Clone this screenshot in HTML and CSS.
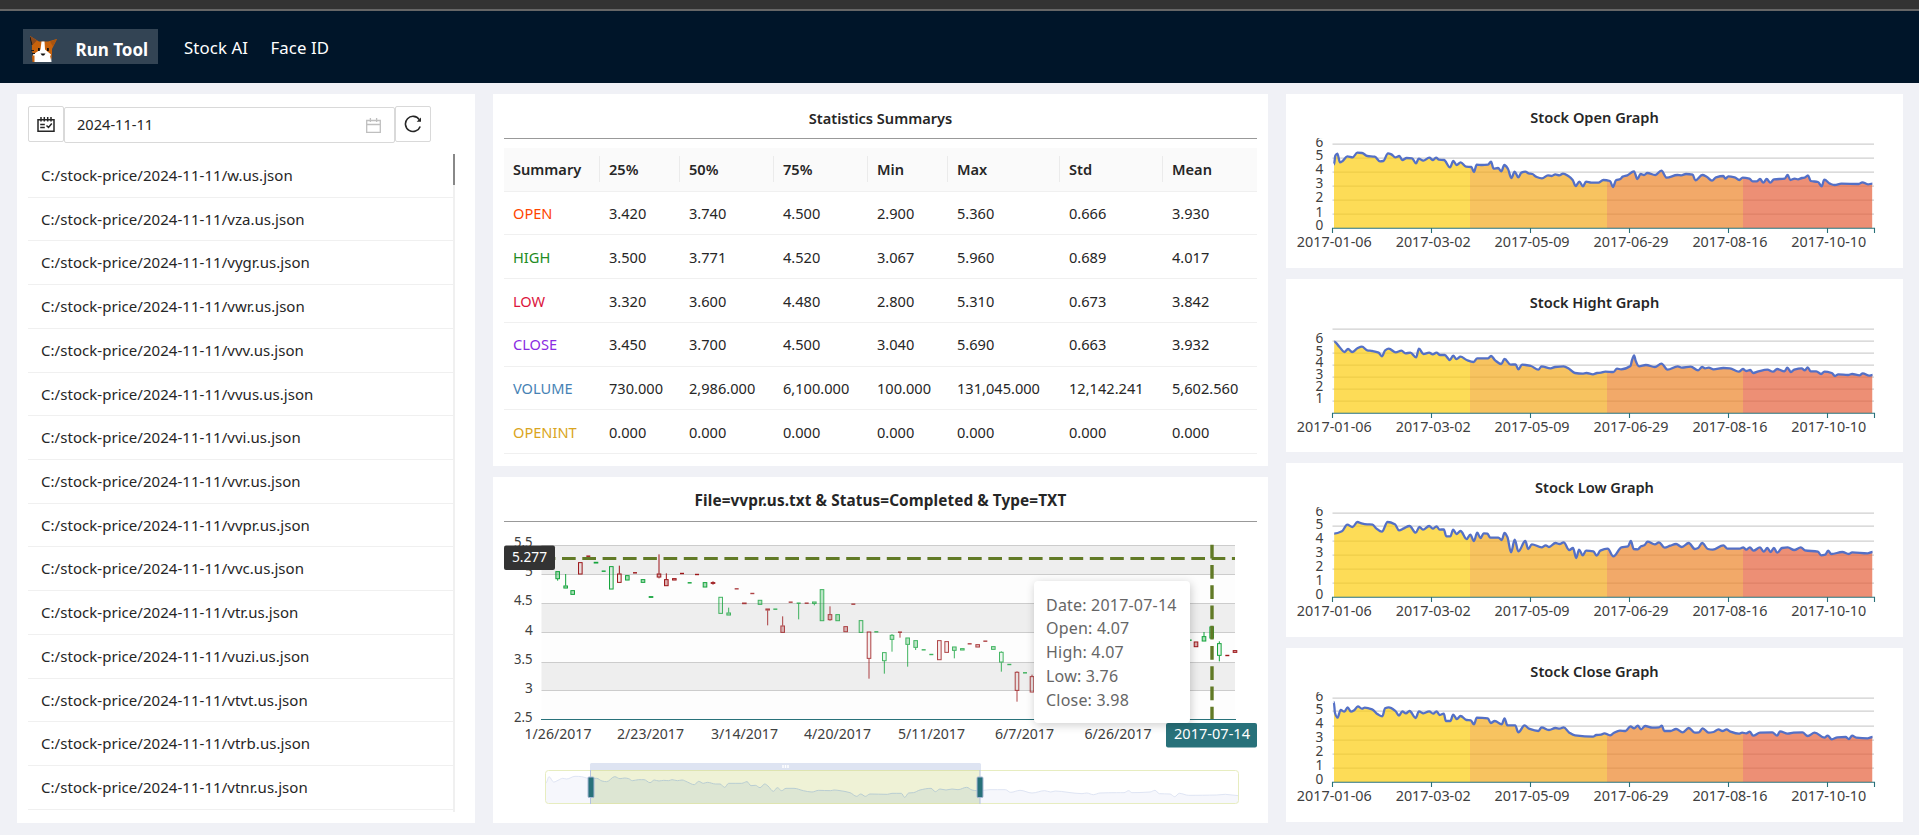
FILE: index.html
```
<!DOCTYPE html>
<html lang="en">
<head>
<meta charset="utf-8">
<title>Run Tool</title>
<link rel="stylesheet" href="styles.css">
</head>
<body>
<div class="window-strip"></div>
<header class="header">
  <div class="brand">
    <svg class="brand-logo" viewBox="0 0 27 26">
      <path d="M0 0 9 5.500h9L27 3l-5 10v5l-1 3H4L2 15V8z" fill="#c8620c"/>
      <path d="M0 0 7 4.500 2.500 9z" fill="#8d4a1d"/>
      <path d="M27 3 20 5.500 23 10.500z" fill="#a9540f"/>
      <path d="M11.500 5.500h3l.5 8 6 5 .5 7.500H3.500l-.5-7.500 7.500-5z" fill="#fff"/>
      <path d="M2 19.500h2.500V26H2.500zM20 19.500h2L21 24z" fill="#c8620c"/>
      <path d="M8 12h1.800v3H8zM17 12h1.800v3H17zM10.500 17.500h5L14 19.500h-2z" fill="#111"/>
      <path d="M1 14.500h3M2 17.500h3M0 1l2 8" stroke="#1b1b1b" fill="none"/>
    </svg>
    <span class="brand-name">Run Tool</span>
  </div>
  <nav class="nav"><a>Stock AI</a><a>Face ID</a></nav>
</header>
<main class="layout">
  <section class="card files">
    <div class="toolbar">
      <button class="icon-btn" aria-label="Schedule">
        <svg width="18" height="15" viewBox="0 0 18 15" fill="none" stroke="#262626" stroke-width="1.500">
          <path d="M1 2.800h16v11.400H1zM4 0v4.500M7.300 0v4.500M10.700 0v4.500M14 0v4.500M3.200 7.500h4.600M3.200 10.500h4.600M9.500 8.500l2 2 3.300-4"/>
        </svg>
      </button>
      <div class="date-input"><span>2024-11-11</span>
        <svg width="15" height="15" viewBox="0 0 15 15" fill="none" stroke="#bfbfbf" stroke-width="1.300"><path d="M.7 2.500h13.600v11.800H.7zM.7 6.500h13.600M4.400 0v4M10.600 0v4"/></svg>
      </div>
      <button class="icon-btn" aria-label="Reload">
        <svg width="18" height="18" viewBox="0 0 18 18" fill="none" stroke="#262626" stroke-width="1.600"><path d="M16.200 11.500A7.600 7.600 0 1 1 15.300 4.600"/><path d="M17 2.500v4.200h-4.300z" fill="#262626" stroke="none"/></svg>
      </button>
    </div>
    <div class="list-wrap">
      <ul class="list">
        <li>C:/stock-price/2024-11-11/w.us.json</li>
        <li>C:/stock-price/2024-11-11/vza.us.json</li>
        <li>C:/stock-price/2024-11-11/vygr.us.json</li>
        <li>C:/stock-price/2024-11-11/vwr.us.json</li>
        <li>C:/stock-price/2024-11-11/vvv.us.json</li>
        <li>C:/stock-price/2024-11-11/vvus.us.json</li>
        <li>C:/stock-price/2024-11-11/vvi.us.json</li>
        <li>C:/stock-price/2024-11-11/vvr.us.json</li>
        <li>C:/stock-price/2024-11-11/vvpr.us.json</li>
        <li>C:/stock-price/2024-11-11/vvc.us.json</li>
        <li>C:/stock-price/2024-11-11/vtr.us.json</li>
        <li>C:/stock-price/2024-11-11/vuzi.us.json</li>
        <li>C:/stock-price/2024-11-11/vtvt.us.json</li>
        <li>C:/stock-price/2024-11-11/vtrb.us.json</li>
        <li>C:/stock-price/2024-11-11/vtnr.us.json</li>
      </ul>
      <div class="scroll-track"><div class="scroll-thumb"></div></div>
    </div>
  </section>
  <div class="middle">
    <section class="card stats">
      <h2 class="card-title ruled">Statistics Summarys</h2>
      <table class="table">
        <colgroup><col class="w96"><col class="w80"><col class="w94"><col class="w94"><col class="w80"><col class="w112"><col class="w103"><col class="w94"></colgroup>
        <thead><tr><th>Summary</th><th>25%</th><th>50%</th><th>75%</th><th>Min</th><th>Max</th><th>Std</th><th>Mean</th></tr></thead>
        <tbody>
          <tr><td class="c-open">OPEN</td><td>3.420</td><td>3.740</td><td>4.500</td><td>2.900</td><td>5.360</td><td>0.666</td><td>3.930</td></tr>
          <tr><td class="c-high">HIGH</td><td>3.500</td><td>3.771</td><td>4.520</td><td>3.067</td><td>5.960</td><td>0.689</td><td>4.017</td></tr>
          <tr><td class="c-low">LOW</td><td>3.320</td><td>3.600</td><td>4.480</td><td>2.800</td><td>5.310</td><td>0.673</td><td>3.842</td></tr>
          <tr><td class="c-close">CLOSE</td><td>3.450</td><td>3.700</td><td>4.500</td><td>3.040</td><td>5.690</td><td>0.663</td><td>3.932</td></tr>
          <tr><td class="c-volume">VOLUME</td><td>730.000</td><td>2,986.000</td><td>6,100.000</td><td>100.000</td><td>131,045.000</td><td>12,142.241</td><td>5,602.560</td></tr>
          <tr><td class="c-openint">OPENINT</td><td>0.000</td><td>0.000</td><td>0.000</td><td>0.000</td><td>0.000</td><td>0.000</td><td>0.000</td></tr>
        </tbody>
      </table>
    </section>
    <section class="card candle">
      <h2 class="card-title ruled strong">File=vvpr.us.txt &amp; Status=Completed &amp; Type=TXT</h2>
      <svg id="candle" class="candle-chart" viewBox="504 522 753 290"></svg>
      <div class="tooltip">Date: 2017-07-14<br>Open: 4.07<br>High: 4.07<br>Low: 3.76<br>Close: 3.98</div>
    </section>
  </div>
  <div class="right">
    <section class="card graph"><h2 class="card-title">Stock Open Graph</h2><svg class="line-chart" data-series="open" viewBox="1286 44 617 129"></svg></section>
    <section class="card graph"><h2 class="card-title">Stock Hight Graph</h2><svg class="line-chart" data-series="high" viewBox="1286 44 617 129"></svg></section>
    <section class="card graph"><h2 class="card-title">Stock Low Graph</h2><svg class="line-chart" data-series="low" viewBox="1286 44 617 129"></svg></section>
    <section class="card graph"><h2 class="card-title">Stock Close Graph</h2><svg class="line-chart" data-series="close" viewBox="1286 44 617 129"></svg></section>
  </div>
</main>
<script src="charts.js"></script>
</body>
</html>
```
FILE: styles.css
```
* { box-sizing: border-box; }
body {
  margin: 0;
  height: 835px;
  overflow: hidden;
  background: #f0f1f6;
  color: #262626;
  font: 14.6px/24px "Noto Sans", "Open Sans", sans-serif;
}
.window-strip { height: 11px; background: #333; border-bottom: 2px solid #666; }
.header { height: 72px; background: #001529; display: flex; padding: 18px 0 0 23px; color: #fff; font-size: 16.8px; }
.brand { width: 135px; height: 35px; background: #334454; display: flex; padding: 7px 0 0 7px; }
.brand-logo { width: 27px; height: 26px; }
.brand-name { margin-left: 18.500px; margin-top: 2px; font-weight: 700; font-size: 17px; letter-spacing: 0; line-height: 24px; white-space: nowrap; }
.nav { display: flex; gap: 22.500px; margin: 7px 0 0 26px; white-space: nowrap; letter-spacing: .1px; }
.layout { display: grid; grid-template-columns: 458px 775px 617px; gap: 18px; padding: 11px 17px 12px; }
.card { background: #fff; }
.files { height: 729px; padding: 12px 11px 0; }
.toolbar { display: flex; align-items: flex-start; }
.icon-btn { width: 36px; height: 36px; padding: 0; border: 1px solid #d9d9d9; border-radius: 2px; background: #fff; display: flex; align-items: center; justify-content: center; }
.date-input { width: 331px; height: 36px; margin-top: 1px; border: 1px solid #d9d9d9; border-radius: 2px; padding: 0 13px 0 12px; display: flex; align-items: center; justify-content: space-between; }
.date-input span { padding-bottom: 2px; }
.list-wrap { display: flex; height: 658px; margin-top: 11px; width: 427px; overflow: hidden; }
.list { list-style: none; margin: 0; padding: 0; width: 425px; }
.list li { height: 43.720px; border-bottom: 1px solid #f0f0f0; padding: 9px 13px 0; font-size: 15px; letter-spacing: .04px; white-space: nowrap; }
.scroll-track { width: 2px; background: #f0f0f0; }
.scroll-thumb { height: 31px; background: #888; }
.middle { display: flex; flex-direction: column; gap: 11px; }
.stats { height: 372px; padding: 0 11px; }
.candle { height: 346px; padding: 0 11px; position: relative; }
.card-title { margin: 0; height: 44px; padding-top: 11.800px; text-align: center; font-size: 14.6px; font-weight: 600; line-height: 24px; white-space: nowrap; }
.graph .card-title { padding-top: 11.400px; }
.ruled { height: 45px; border-bottom: 1px solid #999; }
.card-title.strong { font-weight: 700; font-size: 15.300px; letter-spacing: .1px; padding-top: 11px; }
.table { width: 753px; margin-top: 9px; border-collapse: separate; border-spacing: 0; table-layout: fixed; text-align: left; }
.w80 { width: 80px; } .w94 { width: 94px; } .w96 { width: 96px; } .w103 { width: 103px; } .w112 { width: 112px; }
.table th, .table td { height: 43.720px; padding: 0 0 0 9px; border-bottom: 1px solid #f0f0f0; white-space: nowrap; }
.table th { background: linear-gradient(#ebebeb, #ebebeb) right center / 1px 26px no-repeat #fafafa; font-weight: 600; }
.table th:last-child { background: #fafafa; }
.c-open { color: #ff4500; } .c-high { color: #228b22; } .c-low { color: #dc143c; }
.c-close { color: #8a2be2; } .c-volume { color: #4682b4; } .c-openint { color: #daa520; }
.candle-chart { display: block; width: 753px; height: 290px; overflow: hidden; }
.tooltip { position: absolute; left: 541px; top: 104px; width: 156px; height: 142px; padding: 12.500px 12px; background: #fff; border-radius: 4px; box-shadow: 1px 2px 10px rgba(0,0,0,.2); color: #666; font-size: 16px; letter-spacing: .2px; line-height: 23.800px; white-space: nowrap; }
.right { display: flex; flex-direction: column; gap: 11px; }
.graph { height: 173.650px; }
.line-chart { display: block; width: 617px; height: 129px; }
svg text { font-family: "Noto Sans", "Open Sans", sans-serif; font-size: 14.200px; fill: #404040; }
svg text.badge { font-size: 14.600px; fill: #fff; }
```
FILE: charts.js
```
const n = v => v.toFixed(2);

function label(x, y, text, width, cls) {
  return `<text x="${x}" y="${y}" textLength="${width}" lengthAdjust="spacingAndGlyphs"${cls ? ` class="${cls}"` : ''}>${text}</text>`;
}

/* Smooth curve through the points, keeping local extremes flat. */
function smooth(p) {
  const slope = i => {
    if (i === 0 || i === p.length - 1) return 0;
    const a = (p[i][1] - p[i - 1][1]) / (p[i][0] - p[i - 1][0]);
    const b = (p[i + 1][1] - p[i][1]) / (p[i + 1][0] - p[i][0]);
    return a * b <= 0 ? 0 : 2 * a * b / (a + b);
  };
  let d = `M${n(p[0][0])} ${n(p[0][1])}`;
  for (let i = 1; i < p.length; i++) {
    const h = (p[i][0] - p[i - 1][0]) * 0.36;
    d += `C${n(p[i - 1][0] + h)} ${n(p[i - 1][1] + slope(i - 1) * h)} ${n(p[i][0] - h)} ${n(p[i][1] - slope(i) * h)} ${n(p[i][0])} ${n(p[i][1])}`;
  }
  return d;
}

const parse = s => s.trim().split(/\s+/).map(t => t.split(',').map(Number));

const series = {
  open: { sx: 3, base: 414, ticks: [162, 203, 247, 287, 331, 372], labels: [[6,158],[5,197],[4,239],[3,280],[2,323],[1,366],[0,407]],
    pts: `162,223 166,197 172,191 180,217 188,213 202,199 218,202 232,188 246,189 262,198 284,200 300,214 310,213 324,190 334,193 346,202 358,198 367,210 380,204 396,205 408,220 416,206 430,212 448,203 459,210 468,203 477,209 492,210 510,232 520,213 530,225 542,217 558,230 574,231 582,246 590,224 606,225 624,224 633,215 641,236 654,234 664,244 673,225 684,237 694,264 704,245 715,262 724,248 736,245 746,250 757,252 768,260 786,265 804,256 815,258 826,253 838,256 849,251 866,259 878,270 887,288 898,275 909,289 918,275 934,278 955,278 970,270 990,273 999,291 1008,271 1021,267 1028,260 1042,256 1062,244 1072,267 1082,252 1092,255 1102,249 1126,255 1144,242 1160,263 1192,255 1204,256 1218,252 1238,254 1246,271 1267,255 1280,260 1296,272 1308,262 1330,258 1336,266 1345,259 1364,262 1378,270 1388,263 1408,266 1418,274 1430,274 1440,267 1450,278 1460,267 1471,278 1482,268 1514,266 1523,255 1531,270 1544,266 1554,268 1566,264 1574,263 1584,256 1592,273 1614,276 1625,289 1633,269 1650,281 1664,285 1684,281 1736,282 1747,277 1764,283 1777,281` },
  high: { sx: 2.454, base: 414, ticks: [162, 199, 233, 270, 307, 341, 379], labels: [[6,190],[5,228],[4,262],[3,298],[2,334],[1,370]],
    pts: `133,200 146,216 158,231 167,222 177,231 190,220 201,215 214,226 226,228 242,233 250,244 258,226 267,221 284,232 298,227 308,235 320,233 334,247 341,221 352,237 366,233 375,238 384,233 393,240 404,240 417,255 425,242 433,252 443,245 458,255 475,261 484,250 510,250 518,243 528,256 543,267 551,252 566,269 578,268 585,283 594,269 616,273 634,284 642,274 664,280 675,276 696,274 710,282 724,294 742,296 752,294 768,298 778,294 788,293 798,290 818,291 827,281 837,283 860,273 864,255 869,241 873,258 881,274 898,270 920,276 936,266 951,284 976,274 986,278 1008,275 1026,286 1036,276 1043,280 1052,278 1064,283 1088,279 1104,280 1126,290 1136,282 1144,288 1154,285 1161,294 1174,289 1196,284 1210,290 1220,282 1238,289 1245,278 1254,291 1262,284 1280,280 1288,286 1295,277 1302,289 1316,289 1328,297 1336,290 1354,294 1362,303 1370,298 1394,300 1404,297 1422,301 1430,295 1446,302 1454,300` },
  low: { sx: 2.454, base: 412, ticks: [159, 200, 244, 285, 328, 370], labels: [[6,155],[5,193],[4,235],[3,277],[2,321],[1,363],[0,404]],
    pts: `133,222 152,215 165,195 178,202 190,187 200,191 214,194 227,195 236,206 250,216 264,187 282,194 292,212 304,206 318,199 333,219 342,202 351,210 366,199 375,207 384,200 392,210 402,209 408,230 418,230 425,210 433,223 443,214 458,238 467,225 476,244 484,219 492,235 500,221 509,222 516,234 536,234 544,241 551,220 558,232 567,278 576,240 585,275 602,244 609,268 618,254 642,263 652,257 660,262 676,250 686,253 696,248 710,271 719,265 727,295 734,270 743,287 751,273 769,275 777,288 786,273 804,267 818,290 838,263 854,260 861,244 868,268 878,269 886,260 894,257 902,246 920,254 930,248 944,264 958,258 972,253 986,262 1003,250 1018,268 1026,265 1036,250 1050,268 1062,270 1088,257 1098,267 1128,267 1137,263 1144,270 1153,263 1162,273 1178,263 1187,276 1196,265 1204,277 1212,265 1220,279 1232,265 1246,263 1262,271 1278,263 1288,272 1320,276 1328,287 1338,285 1345,273 1353,283 1380,277 1396,283 1404,278 1442,281 1454,277` },
  close: { sx: 2.454, base: 412, ticks: [159, 200, 244, 285, 328, 370], labels: [[6,155],[5,193],[4,235],[3,277],[2,321],[1,363],[0,404]],
    pts: `132,172 135,205 141,219 149,196 158,201 166,188 174,201 182,197 191,185 201,192 208,189 226,194 240,209 251,215 258,191 267,188 284,200 292,213 300,200 309,206 318,199 333,220 341,200 352,206 366,200 376,207 384,200 392,211 402,207 407,229 418,229 425,210 434,223 443,214 458,226 468,227 476,239 483,219 510,221 517,235 527,229 544,239 551,221 558,242 577,242 585,263 600,242 611,252 634,259 642,248 660,256 676,250 686,252 696,248 710,264 724,272 768,276 776,271 788,270 796,266 810,272 818,266 834,258 848,259 860,245 869,251 878,243 886,254 896,244 914,249 930,248 937,243 943,259 958,259 972,253 988,263 1003,250 1018,264 1028,263 1037,251 1052,264 1064,262 1076,254 1086,259 1096,254 1104,260 1126,267 1134,264 1144,266 1153,261 1161,273 1178,264 1208,263 1220,273 1227,260 1246,267 1260,264 1282,263 1295,274 1312,264 1336,279 1344,273 1354,284 1368,278 1388,277 1396,283 1404,273 1414,279 1442,281 1454,277` }
};

const zones = [[1334, 136, '#fccd0f'], [1470, 137, '#f4a91d'], [1607, 136, '#ec8429'], [1743, 129.500, '#e5603b']];
const months = ['2017-01-06', '2017-03-02', '2017-05-09', '2017-06-29', '2017-08-16', '2017-10-10'];

document.querySelectorAll('.line-chart').forEach(svg => {
  const key = svg.dataset.series, s = series[key];
  const py = v => 134 + (v - s.base) / 3;
  const pts = parse(s.pts).map(([x, y]) => [1280 + x / s.sx, py(y)]);
  const line = smooth(pts);
  let out = s.ticks.map(t => `<path d="M1332.500 ${Math.round(py(t)) + .1}H1874" stroke="#cfcfcf" stroke-width="1.200"/>`).join('');
  out += `<clipPath id="area-${key}"><path d="${line}V134H1334Z"/></clipPath><g clip-path="url(#area-${key})" fill-opacity=".7">`;
  out += zones.map(([x, w, c]) => `<rect x="${x}" y="44" width="${w}" height="90" fill="${c}"/>`).join('') + '</g>';
  out += `<path d="${line}" fill="none" stroke="#5470c6" stroke-width="2.300" stroke-linejoin="round"/>`;
  out += '<path d="M1332 134.300H1875M1332.500 134v5M1431.500 134v5M1530.500 134v5M1629.500 134v5M1728.500 134v5M1827.500 134v5M1874.500 134v5" stroke="#28717a" stroke-width="1.100" fill="none"/>';
  out += s.labels.map(([t, y]) => label(1315.500, n(py(y) + 4.800), t, 7.800)).join('');
  out += months.map((m, i) => label(1296.800 + 98.900 * i, 152.500, m, 75)).join('');
  svg.innerHTML = out;
});

/* Candles: x, body top, body bottom, wick top, wick bottom, direction. */
const candles = `
203,304,327,304,332,u 227,347,355,312,355,u 248,361,374,361,374,u 271,277,313,277,313,d 295,257,260,257,260,d 318,276,280,276,280,u 341,302,304,302,304,u
364,289,358,289,358,u 388,311,338,287,338,d 412,316,331,316,331,u 435,307,310,307,310,d 459,328,338,328,338,u 483,379,383,379,383,u 507,311,322,253,325,d
529,328,348,310,348,d 553,325,331,325,331,d 576,309,311,309,311,d 599,337,340,337,340,u 621,312,314,312,314,d 645,337,352,337,352,u 669,337,341,334,344,d
692,381,431,381,431,u 716,428,436,413,436,u 740,355,357,355,357,d 763,398,402,398,402,d 787,369,371,369,371,d 810,390,404,390,404,u 833,416,421,416,466,d
856,416,419,416,419,u 878,467,488,439,488,d 902,395,397,395,397,d 926,398,400,398,448,u 950,398,401,398,401,d 973,395,401,395,406,u 996,358,453,358,453,u
1020,433,450,409,452,d 1043,433,453,433,453,u 1067,469,486,469,486,d 1090,401,404,401,404,d 1113,451,488,451,488,u 1137,485,566,485,626,d 1159,484,487,484,487,u 1183,547,573,547,611,u
1206,495,509,492,545,u 1230,485,488,485,503,d 1253,503,524,503,590,u 1277,511,533,511,540,u 1301,538,540,538,540,u 1324,552,554,552,554,u 1348,511,570,511,570,d
1370,514,548,514,548,d 1393,530,542,530,565,u 1417,535,541,535,541,u 1439,520,522,520,522,d 1463,523,532,523,532,d 1486,512,514,512,514,d 1510,529,539,529,539,u 1534,546,577,544,605,u
1558,582,584,582,584,u 1581,606,662,604,695,d 1605,607,610,607,610,u 1626,619,667,614,667,d 2099,509,511,509,511,u 2118,515,531,515,531,d 2142,499,514,486,514,u 2165,470,505,470,505,u 2188,520,557,514,574,u 2212,555,557,555,557,d 2235,541,548,541,548,d`;

function drawCandles() {
  const col = { u: '#12a33a', d: '#9c1518' };
  return candles.trim().split(/\s+/).map((c, i) => {
    const [x, t, b, h, l, k] = c.split(',');
    const px = 490 + x / 3, y = v => 470 + v / 3;
    const w = b - t < 4 ? 3 : 3.600, o = i > 20 && i < 62 ? .8 : 1;
    return `<g stroke="${col[k]}" fill="${col[k]}" opacity="${o}"><rect x="${n(px - w / 2)}" y="${n(y(t) + .3)}" width="${w}" height="${n(Math.max((b - t) / 3 - .6, .4))}" fill-opacity="${b - t < 26 || x == 996 || x == 2165 ? .35 : .08}"/><path d="M${n(px)} ${n(y(h))}V${n(y(t))}M${n(px)} ${n(y(b))}V${n(y(l))}"/></g>`;
  }).join('');
}

const overview = parse(`168,939 177,920 191,936 204,931 218,925 230,927 255,919 275,920 290,924 302,925 320,925 336,933 350,935 374,920 390,926 404,924 416,926 427,932 446,929 462,929 480,938 493,930 507,933 521,931 536,932 546,929 562,932 576,930 592,936 613,944 626,934 640,940 652,937 677,942 690,942 704,952 716,940 755,940 771,935 783,947 796,946 810,953 824,942 834,948 850,964 862,953 875,962 888,955 912,955 940,962 966,966 986,961 1022,962 1032,960 1050,962 1080,968 1100,979 1112,972 1126,979 1140,972 1192,973 1206,970 1234,970 1244,982 1256,969 1270,968 1290,960 1323,955 1336,965 1350,957 1368,960 1386,957 1404,959 1430,952 1446,960 1460,962 1480,961 1500,959 1546,959 1562,967 1590,961 1626,969 1664,962 1682,966 1696,963 1734,967 1776,971 1790,969 1810,974 1830,969 1880,968 1902,968 1916,962 1926,968 1980,966 1995,961 2008,971 2040,972 2054,980 2068,970 2096,976 2180,975 2206,973 2246,977`)
  .map(([x, y]) => [490 + x / 3, 470 + y / 3]);

(function drawCandleChart() {
  const rows = [545, 574.500, 603.500, 632.500, 662, 690, 719];
  let o = '';
  for (let i = 0; i < 6; i++) o += `<rect x="541.500" y="${rows[i]}" width="693.500" height="${rows[i + 1] - rows[i]}" fill="${i % 2 ? '#fdfdfd' : '#eee'}"/>`;
  for (let i = 0; i < 6; i++) o += `<path d="M541.500 ${Math.floor(rows[i]) + .5}H1235" stroke="#ccc"/>`;
  [['5.5', 514], ['5', 525], ['4.5', 514], ['4', 525], ['3.5', 514], ['3', 525], ['2.5', 514]].forEach(([t, x], i) => {
    o += label(x, 547 + 29.170 * i, t, t.length > 1 ? 18.500 : 7.800);
  });
  o += drawCandles();
  o += '<path d="M541 719.500H1236" stroke="#28717a"/>';
  o += '<path d="M541.700 558.500H1235" stroke="#617a26" stroke-width="3" stroke-dasharray="13.700 6.600"/><path d="M1212 544.700V719" stroke="#617a26" stroke-width="3.400" stroke-dasharray="13.700 6.550"/>';
  [['1/26/2017', 524.500], ['2/23/2017', 617], ['3/14/2017', 711], ['4/20/2017', 804], ['5/11/2017', 898], ['6/7/2017', 995], ['6/26/2017', 1084.500]].forEach(([t, x]) => {
    o += label(x, 738.500, t, t.length === 8 ? 59 : 67);
  });
  o += '<rect x="504" y="545.500" width="51" height="24.500" rx="2" fill="#333"/>' + label(512, 562, '5.277', 35, 'badge');
  o += '<rect x="1166" y="723" width="91" height="24.500" rx="2" fill="#28717a"/>' + label(1174, 738.500, '2017-07-14', 76, 'badge');

  const d = smooth(overview), area = d + 'V803H546Z';
  o += '<clipPath id="picked"><rect x="590.500" y="770" width="389.500" height="34"/></clipPath>';
  o += `<path d="${area}" fill="#f6f7fc"/><path d="${d}" fill="none" stroke="#dfe5f4"/>`;
  o += '<rect x="545.500" y="770.500" width="693" height="33" rx="3" fill="none" stroke="#e7edc0"/>';
  o += `<g clip-path="url(#picked)"><rect x="590.500" y="770" width="390" height="34" fill="#eff2d6"/><path d="${area}" fill="#dde6d3"/><path d="${d}" fill="none" stroke="#b9cdd2"/><path d="M590 770.500H980M590 803.500H980" stroke="#dee4b0"/></g>`;
  o += '<path d="M590 770v-5.500a1.500 1.500 0 0 1 1.500-1.500H979.500a1.500 1.500 0 0 1 1.500 1.500V770z" fill="#dee4f2"/>';
  o += '<path d="M783 765v3M785.500 765v3M788 765v3" stroke="#fff" stroke-width="1.500"/><path d="M590.500 770v34M980 770v34" stroke="#b3c1de"/>';
  o += '<rect x="588" y="777" width="6" height="20.500" rx="1" fill="#28717a" stroke="#a8b8d4"/><rect x="977" y="777" width="6" height="20.500" rx="1" fill="#28717a" stroke="#a8b8d4"/>';
  document.getElementById('candle').innerHTML = o;
})();
```
